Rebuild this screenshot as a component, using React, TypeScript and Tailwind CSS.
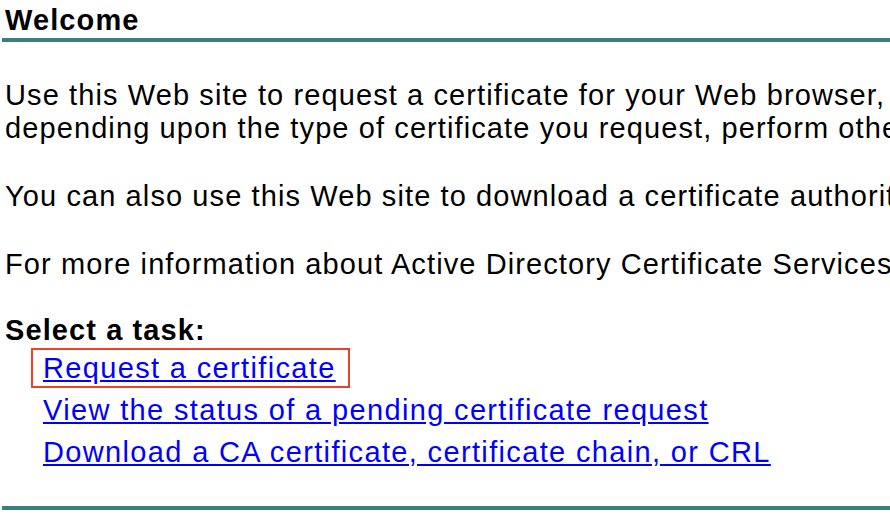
export default function App() {
  return (
    <div className="w-[890px] h-[524px] overflow-hidden bg-white text-black font-['Liberation_Sans',Arial,sans-serif] text-[29px] tracking-[1.1px]">
      {/* Header */}
      <div className="pl-[5px] pt-[4px] font-bold leading-[32px] whitespace-nowrap">Welcome</div>
      <div className="ml-[2px] mt-[2px] h-[4px] bg-[#3a7f7f]" />

      {/* Body */}
      <div className="pl-[5px] pt-[37px] leading-[33px] whitespace-nowrap">
        <p>
          Use this Web site to request a certificate for your Web browser, e-mail client, or other program. By using
          a certificate, you can verify your identity
          <br />
          depending upon the type of certificate you request, perform other security tasks.
        </p>
        <p className="mt-[35px]">
          You can also use this Web site to download a certificate authority (CA) certificate, certificate chain, or
          certificate revocation list (CRL).
        </p>
        <p className="mt-[35px]">
          For more information about Active Directory Certificate Services, see Active Directory Certificate Services
          Documentation.
        </p>

        <p className="mt-[33px] font-bold">Select a task:</p>
        <div className="flex flex-col items-start pl-[38px] leading-[42px] tracking-[1.35px] text-[#0000ff]">
          <a
            href="#"
            className="underline outline-[2px] outline-solid outline-[#e8432c] -outline-offset-[1px] pl-[11px] pr-[13px] -ml-[11px] leading-[38px] my-[2px]"
          >
            Request a certificate
          </a>
          <a href="#" className="underline">View the status of a pending certificate request</a>
          <a href="#" className="underline">Download a CA certificate, certificate chain, or CRL</a>
        </div>
      </div>

      <div className="ml-[2px] mt-[33px] h-[4px] bg-[#3a7f7f]" />
    </div>
  );
}
